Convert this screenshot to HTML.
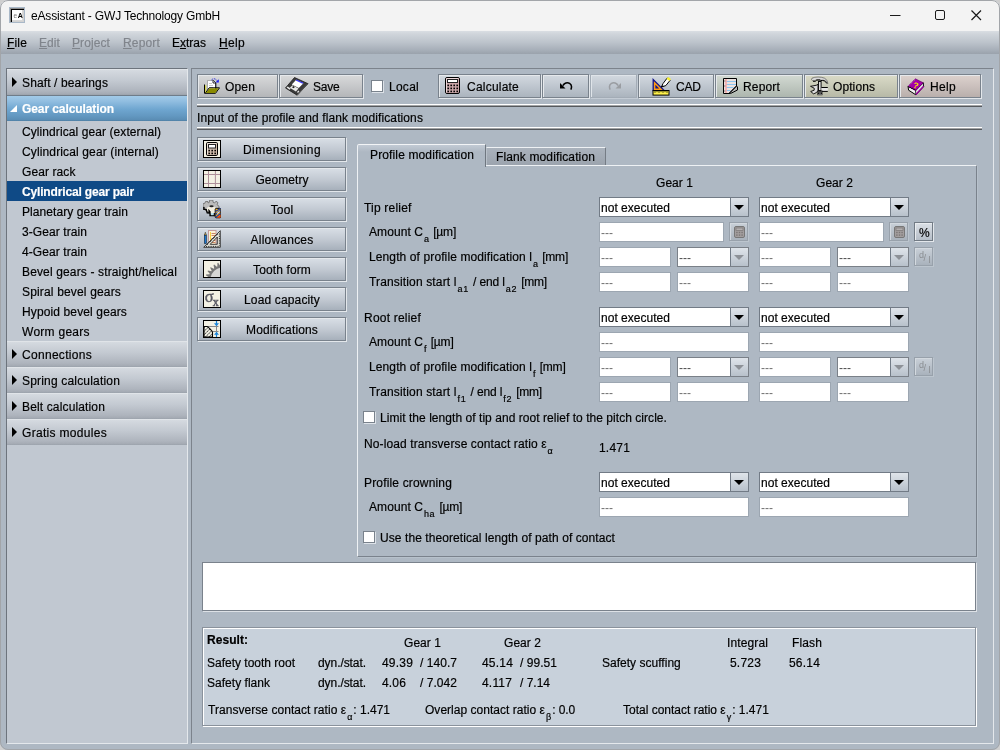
<!DOCTYPE html>
<html><head><meta charset="utf-8"><title>eAssistant - GWJ Technology GmbH</title>
<style>
*{box-sizing:border-box;margin:0;padding:0}
html,body{width:1000px;height:750px;overflow:hidden;background:#cfcfcf}
body{font-family:"Liberation Sans",Arial,sans-serif;font-size:12px;color:#000;position:relative}
.a{position:absolute;white-space:nowrap}
.t{position:absolute;white-space:nowrap;line-height:14px;height:14px;-webkit-text-stroke:.18px}
#win{will-change:transform;position:absolute;left:0;top:0;width:1000px;height:750px;background:#aeb8c3;border-radius:8px;overflow:hidden}
#frame{position:absolute;left:0;top:0;width:1000px;height:750px;border:1px solid #a2a5a9;border-radius:8px;z-index:50}
#title{position:absolute;left:0;top:0;width:1000px;height:31px;background:#f3f3f3}
#menu{position:absolute;left:0;top:31px;width:1000px;height:23px;background:linear-gradient(#dadee3 0,#d0d5db 12%,#bcc3cb 50%,#a5adb7 85%,#9aa2ac 100%)}

u{text-decoration:underline;text-underline-offset:1px}
#left{position:absolute;left:6px;top:68px;width:182px;height:676px;background:#c1c8d1;border-left:1px solid #6d747d;border-top:1px solid #6d747d;border-right:1px solid #e4e8ec;border-bottom:1px solid #e4e8ec}
.hd{position:absolute;left:7px;width:180px;height:26px;background:linear-gradient(#e6e9ed 0,#d4d9df 6%,#c3c9d1 45%,#aeb4bd 85%,#a4aab3 96%,#99a1ab 100%)}
.hd.sel{background:linear-gradient(#a6cdea 0,#90bde0 25%,#6fa6d0 55%,#6398c1 80%,#5a8db4 96%,#4c7da2 100%)}
.hd i{position:absolute;left:5px;top:8px;width:0;height:0;border-left:5.5px solid #000;border-top:5px solid transparent;border-bottom:5px solid transparent}
.hd.sel i{left:3px;top:10px;border-left:7px solid transparent;border-top:0;border-bottom:7px solid #fff}
.isel{position:absolute;left:7px;width:180px;height:20px;background:#0f4a86}
#main{position:absolute;left:191px;top:68px;width:803px;height:676px;border-left:1px solid #7c838c;border-top:1px solid #7c838c;border-right:1px solid #e4e8ec;border-bottom:1px solid #e4e8ec}
.tb{position:absolute;top:74px;height:24px;border:1px solid #79828c;background:linear-gradient(#d9dadb,#b4b6b9);box-shadow:1px 1px 0 #e3e7eb,inset 1px 1px 0 #e6e9ec}
.sep{position:absolute;left:197px;width:785px;height:3px;background:linear-gradient(#fff 0,#fff 33.3%,#a2a4a6 33.3%,#a2a4a6 66.6%,#55585c 66.6%)}
.sb{position:absolute;left:197px;width:149px;height:24px;border:1px solid #79828c;background:linear-gradient(#d9dfe6,#c3cad3 50%,#a7b0bb);box-shadow:1px 1px 0 #e3e7eb,inset 1px 1px 0 #e6e9ec}
.ic{position:absolute;width:18px;height:18px;background:#ece9d8;border:1px solid #444}
.f{position:absolute;height:20px;background:#fff;border:1px solid #9ca6b1;color:#707070;line-height:20px;padding-left:1px}
.c{position:absolute;height:20px;background:#fff;border:1px solid #727b86;line-height:20px;padding-left:1px;white-space:nowrap;-webkit-text-stroke:.18px}
.c:after{content:"";position:absolute;right:0;top:0;width:17px;height:18px;border-left:1px solid #727b86;background:linear-gradient(#dfe4ea,#b8c1cb)}
.c em{position:absolute;z-index:2;right:4px;top:7px;width:0;height:0;border-top:5.500px solid #000;border-left:5px solid transparent;border-right:5px solid transparent}
.c.d{color:#4a4a4a;border-color:#7a8088;-webkit-text-stroke:0}
.c.d em{border-top-color:#8d9197}
.cb{position:absolute;width:12px;height:12px;background:#fff;border:1px solid #79828c;box-shadow:1px 1px 0 #dde2e8}
sub{font-size:9px;vertical-align:baseline;position:relative;top:6px;margin-left:1px;margin-right:1px;line-height:0}
.pn{position:absolute}
</style></head><body>
<div id="win">
<div id="title"><div class="a" style="left:9px;top:7px;width:16px;height:16px;border:1px solid #a9b8c8;background:#fff;box-shadow:inset 1px 1px 0 #8c8c8c,inset 2px 2px 0 #000,inset -1px -1px 0 #d2d2d2,inset -2px -2px 0 #d8d8d8;font-size:7px;line-height:15px;padding-left:3.500px;overflow:hidden"><span style="color:#777;font-size:6.500px">e</span><b style="margin-left:.500px">A</b></div>
<div class="a" style="left:31px;top:8px;font-size:12px;line-height:16px;letter-spacing:-0.17px">eAssistant - GWJ Technology GmbH</div>
<svg class="a" style="left:880px;top:0" width="120" height="31" viewBox="0 0 120 31" fill="none" stroke="#1a1a1a" stroke-width="1"><path d="M10 15.500h10.500"/><rect x="55.5" y="10.5" width="9" height="9" rx="1.5"/><path d="M91.500 10.500l9.500 9.500M101 10.500l-9.500 9.500" stroke-width="1.200"/></svg></div>
<div id="menu"></div>
<div class="t" style="left:7px;top:36px;letter-spacing:0.166px;"><u>F</u>ile</div>
<div class="t" style="left:39px;top:36px;color:#80858c;letter-spacing:0.081px;"><u>E</u>dit</div>
<div class="t" style="left:72px;top:36px;color:#80858c;letter-spacing:0.093px;"><u>P</u>roject</div>
<div class="t" style="left:123px;top:36px;color:#80858c;letter-spacing:0.164px;"><u>R</u>eport</div>
<div class="t" style="left:172px;top:36px;letter-spacing:-0.001px;">E<u>x</u>tras</div>
<div class="t" style="left:219px;top:36px;letter-spacing:0.33px;"><u>H</u>elp</div>
<div id="left"></div>
<div class="hd" style="top:69px"><i></i></div>
<div class="t" style="left:22px;top:76px;letter-spacing:0.122px;">Shaft / bearings</div>
<div class="hd sel" style="top:95px"><i></i></div>
<div class="t" style="left:22px;top:102px;font-weight:bold;color:#fff;letter-spacing:-0.086px;">Gear calculation</div>
<div class="pn" style="left:7px;top:95px;width:180px;height:1px;background:#6f7c89"></div>
<div class="t" style="left:22px;top:125px;letter-spacing:0.085px;">Cylindrical gear (external)</div>
<div class="t" style="left:22px;top:145px;letter-spacing:0.134px;">Cylindrical gear (internal)</div>
<div class="t" style="left:22px;top:165px;letter-spacing:0.091px;">Gear rack</div>
<div class="isel" style="top:181px"></div>
<div class="t" style="left:22px;top:185px;font-weight:bold;color:#fff;letter-spacing:-0.161px;">Cylindrical gear pair</div>
<div class="t" style="left:22px;top:205px;letter-spacing:0.064px;">Planetary gear train</div>
<div class="t" style="left:22px;top:225px;letter-spacing:0.081px;">3-Gear train</div>
<div class="t" style="left:22px;top:245px;letter-spacing:0.081px;">4-Gear train</div>
<div class="t" style="left:22px;top:265px;letter-spacing:0.142px;">Bevel gears - straight/helical</div>
<div class="t" style="left:22px;top:285px;letter-spacing:0.164px;">Spiral bevel gears</div>
<div class="t" style="left:22px;top:305px;letter-spacing:0.126px;">Hypoid bevel gears</div>
<div class="t" style="left:22px;top:325px;letter-spacing:0.266px;">Worm gears</div>
<div class="hd" style="top:341px"><i></i></div>
<div class="t" style="left:22px;top:348px;letter-spacing:0.299px;">Connections</div>
<div class="hd" style="top:367px"><i></i></div>
<div class="t" style="left:22px;top:374px;letter-spacing:0.182px;">Spring calculation</div>
<div class="hd" style="top:393px"><i></i></div>
<div class="t" style="left:22px;top:400px;letter-spacing:0.143px;">Belt calculation</div>
<div class="hd" style="top:419px"><i></i></div>
<div class="t" style="left:22px;top:426px;letter-spacing:0.307px;">Gratis modules</div>
<div id="main"></div>
<div class="tb" style="left:197px;width:81px;"></div>
<div class="t" style="left:225px;top:80px;letter-spacing:0.161px;">Open</div>
<div class="tb" style="left:279px;width:84px;"></div>
<div class="t" style="left:313px;top:80px;letter-spacing:-0.213px;">Save</div>
<div class="cb" style="left:371px;top:80px"></div>
<div class="t" style="left:389px;top:80px;letter-spacing:0.263px;">Local</div>
<div class="tb" style="left:438px;width:103px;background:linear-gradient(#d3d9e0,#abb4be);"></div>
<div class="t" style="left:467px;top:80px;letter-spacing:0.219px;">Calculate</div>
<div class="tb" style="left:542px;width:47px;background:linear-gradient(#d3d9e0,#abb4be);"></div>
<div class="tb" style="left:590px;width:47px;background:linear-gradient(#d3d9e0,#abb4be);border-color:#a3acb6;box-shadow:1px 1px 0 #c3cbd4,inset 1px 1px 0 #dfe4e9;"></div>
<div class="tb" style="left:638px;width:76px;background:linear-gradient(#d3d9e0,#abb4be);"></div>
<div class="t" style="left:676px;top:80px;letter-spacing:-0.179px;">CAD</div>
<div class="tb" style="left:715px;width:88px;background:linear-gradient(#d3dad3,#adb6ae);"></div>
<div class="t" style="left:743px;top:80px;letter-spacing:0.164px;">Report</div>
<div class="tb" style="left:804px;width:94px;background:linear-gradient(#dadbc8,#b7b9a7);"></div>
<div class="t" style="left:833px;top:80px;letter-spacing:0.092px;">Options</div>
<div class="tb" style="left:899px;width:82px;background:linear-gradient(#ddd2ce,#b9afac);"></div>
<div class="t" style="left:930px;top:80px;letter-spacing:0.33px;">Help</div>
<svg class="a" style="left:204px;top:78px" width="16" height="17" viewBox="0 0 16 17" ><path d="M3.5 2.5h5.5l2.5 2.5v6.5h-8z" fill="#fff" stroke="#888" stroke-width=".6"/>
<path d="M9 2.2l2.8 2.8v6" fill="none" stroke="#000" stroke-width="1"/><path d="M9 2.5v2.5h2.5" fill="#fff" stroke="#000" stroke-width=".8"/>
<path d="M5 5.5h3M5 7.5h4M5 9.5h4" stroke="#bbb" stroke-width=".8"/>
<path d="M.6 7.2h1.6v7.6h-1.6z" fill="#d6d64a"/>
<path d="M.5 6.5v8.8h11l4-5.5h-10.3l-3.6 5" fill="none" stroke="#000" stroke-width="1"/>
<path d="M1.8 15l3.7-4.8h9.3l-3.6 4.8z" fill="#8a8a00"/>
<path d="M7.5 2c1.5-1.8 4-1.6 5.6.6" fill="none" stroke="#2a2ad8" stroke-width="1" stroke-dasharray="1.6 1"/>
<path d="M14.8 1.2v3.4h-3.4z" fill="#1c1cf0"/></svg>
<svg class="a" style="left:285px;top:77px" width="24" height="19" viewBox="0 0 24 19" ><path d="M9.5.5l13.5 6.2-10.8 11.5-11.7-7.2z" fill="#3a3a3a" stroke="#1a1a1a" stroke-width=".8"/>
<path d="M11.2 2.8l7.2 3.4-4.6 4.8-7-3.6z" fill="#fff"/>
<path d="M11.6 2.4l7 3.3-.9 1-7-3.3z" fill="#3a3af0"/>
<path d="M1.5 10.6l1.2-1 3 1.9-1.2 1.2zM4.8 10.8l2.7-2.6 6 3.3-2.6 2.9zM12 15l1.4-1.5 1 .8-1.4 1.6z" fill="#e8e8e8"/>
<path d="M7 10.2l1.3-1.2 1.6.9-1.3 1.3z" fill="#222"/>
<path d="M12.2 18l10.6-11.3" stroke="#666" stroke-width=".8"/></svg>
<svg class="a" style="left:445px;top:77px" width="15" height="17" viewBox="0 0 15 17" ><rect x=".5" y=".5" width="14" height="16" rx="1.5" fill="#c9a5a8" stroke="#000"/>
<path d="M1.5 15.5v-14h12" fill="none" stroke="#ecd6d8" stroke-width="1"/>
<rect x="2.5" y="2.5" width="10" height="3" fill="#fff" stroke="#222" stroke-width="1"/>
<g fill="#000"><rect x="2.4" y="7.6" width="1.6" height="1.6"/><rect x="5.4" y="7.6" width="1.6" height="1.6"/><rect x="8.4" y="7.6" width="1.6" height="1.6"/><rect x="11.4" y="7.6" width="1.6" height="1.6"/><rect x="2.4" y="10.6" width="1.6" height="1.6"/><rect x="5.4" y="10.6" width="1.6" height="1.6"/><rect x="8.4" y="10.6" width="1.6" height="1.6"/><rect x="11.4" y="10.6" width="1.6" height="1.6"/><rect x="2.4" y="13.6" width="1.6" height="1.6"/><rect x="5.4" y="13.6" width="1.6" height="1.6"/><rect x="8.4" y="13.6" width="1.6" height="1.6"/><rect x="11.4" y="13.6" width="1.6" height="1.6"/></g></svg>
<svg class="a" style="left:559px;top:81px" width="14" height="10" viewBox="0 0 14 10" ><path d="M1 2v5.5h5.5z" fill="#000"/><path d="M3.8 4.6c1.6-2.6 4.4-3.6 6.8-2.2 2.2 1.4 2.4 3.6 1.2 6.2" fill="none" stroke="#000" stroke-width="1.5"/></svg>
<svg class="a" style="left:608px;top:81px" width="14" height="10" viewBox="0 0 14 10" ><g transform="translate(14,0) scale(-1,1)"><path d="M1 2v5.5h5.5z" fill="#9a9da2"/><path d="M3.8 4.6c1.6-2.6 4.4-3.6 6.8-2.2 2.2 1.4 2.4 3.6 1.2 6.2" fill="none" stroke="#9a9da2" stroke-width="1.5"/></g></svg>
<svg class="a" style="left:652px;top:76px" width="20" height="20" viewBox="0 0 20 20" ><path d="M1.2 3.6v11h11z" fill="#ff9a10" stroke="#14148c" stroke-width="1.3" stroke-linejoin="miter"/>
<path d="M3.4 8.8v3.8h3.8z" fill="#14148c"/>
<rect x="1" y="14.5" width="16" height="4.6" fill="#fff24a" stroke="#000" stroke-width="1"/>
<path d="M3 14.8v2M5 14.8v1.4M7 14.8v2M9 14.8v1.4M11 14.8v2M13 14.8v1.4M15 14.8v2" stroke="#000" stroke-width=".8"/>
<path d="M9.4 11l1.6-3.4 4.2-5.6 3 2.2-4.400 5.400z" fill="#fff" stroke="#000" stroke-width="1"/>
<path d="M14.400 2.800l1.800-1.900 2.800 2-1.500 2.200z" fill="#f4ee30"/>
<path d="M9 11.600l1.500-2.400 1.300 1z" fill="#000"/></svg>
<svg class="a" style="left:723px;top:78px" width="16" height="17" viewBox="0 0 16 17" ><path d="M.5.5h13v7.500l-7.500 7.500h-5.500z" fill="#ebe2e0" stroke="none"/>
<path d="M3.500 3.500h9.500M3.500 6.500h9.500M3.500 9.500h7M3.500 12.500h4" stroke="#8cc4ee" stroke-width="1"/>
<path d="M3 1v14" stroke="#ff8a8a" stroke-width="1"/>
<path d="M1.800 2.500v1M1.800 7.500v1M1.800 12.500v1" stroke="#333" stroke-width=".8"/>
<path d="M13.500 8l1 .8v3.200l-7 3.500h-1.500z" fill="#b8b8b8" stroke="#000" stroke-width="1"/>
<path d="M.5.500h13v7.500l-7.500 7.500h-5.500z" fill="none" stroke="#000" stroke-width="1"/></svg>
<svg class="a" style="left:810px;top:76px" width="19" height="20" viewBox="0 0 19 20" ><path d="M2 2.200c3-1.600 9-1.600 12.500 0 2 1 3 3 3.300 5.500l-1.300-1.800c-1-1.400-2.400-1.600-4-1.600h-2.500v-.8h-3.500l-1.500 1.200h-2.500l-1-1.200z" fill="#d8d8d8" stroke="#444" stroke-width=".6"/>
<path d="M3 5.300h2.300l1.500-1.200h3.400" fill="none" stroke="#000" stroke-width="1"/>
<path d="M10.500 4.500c3-.3 5 .3 6.300 3" fill="none" stroke="#000" stroke-width="1"/>
<rect x="8.500" y="5.500" width="2.600" height="9" fill="#e0e0e0" stroke="#000" stroke-width=".9"/>
<path d="M0.500 10.300l4.500-.8c1.500-.2 2.500-.6 3-1.200v6.500c-1 1.400-2.500 2.500-4.500 3l-2.800-2.300 3.500-1.300v-2z" fill="#dcdcdc" stroke="#000" stroke-width=".9"/>
<rect x="11.400" y="11.700" width="6.400" height="3.400" fill="#e6e6e6" stroke="none"/><path d="M11.400 11.500h6.400M11.400 15.400h6.400" stroke="#000" stroke-width="1"/>
<rect x="7.400" y="14.500" width="5" height="4.700" fill="#111"/>
<path d="M8.500 15.600h1v1h-1zM10.500 15.600h1v1h-1zM9.500 16.800h1v1h-1zM8.500 17.900h1v1h-1zM10.500 17.900h1v1h-1z" fill="#ccc"/></svg>
<svg class="a" style="left:907px;top:78px" width="18" height="18" viewBox="0 0 18 18" ><path d="M1 8.200l.6 4 7.200 4.600 7.800-8.300-.4-3.600z" fill="#f2f2f2" stroke="#000" stroke-width="1"/>
<path d="M8.500 12.500l.4 4.200 7.700-8.200-.4-3.600z" fill="#e4ece4" stroke="#000" stroke-width=".8"/>
<path d="M8.800 16.500l7.700-8.200" stroke="#9a009e" stroke-width="1.400"/>
<path d="M8.300.8l8 4-7.600 8-7.800-4.600z" fill="#a400a8" stroke="#5a005e" stroke-width=".6"/>
<path d="M1.200 8l7.300-7" stroke="#d9a6dc" stroke-width="1" stroke-dasharray="1 1"/>
<path d="M1 8.500l1.300 1 1-.4 1.200 1.400 1-.4 1.200 1.400 1-.3 1 1.200" fill="none" stroke="#000" stroke-width=".9"/><text x="6.200" y="10.300" font-family="Liberation Sans,sans-serif" font-weight="bold" font-size="8.500" fill="#f4f000" transform="rotate(18 8 8)">?</text></svg>
<div class="sep" style="top:104px"></div>
<div class="t" style="left:197px;top:111px;letter-spacing:0.103px;">Input of the profile and flank modifications</div>
<div class="sep" style="top:127px"></div>
<div class="sb" style="top:137px"></div>
<svg class="a" style="left:203px;top:140px" width="18" height="18" viewBox="0 0 18 18" ><rect x=".5" y=".5" width="17" height="17" fill="#f3f1e4" stroke="#000" stroke-width="1"/><rect x="3.500" y="2.500" width="11" height="13" rx="1.300" fill="#cdb9aa" stroke="#000" stroke-width="1"/>
<path d="M4.500 14.500v-11h9" fill="none" stroke="#eadfd6" stroke-width="1"/>
<rect x="5.500" y="4.500" width="7" height="3.500" fill="#fff" stroke="#222" stroke-width="1"/>
<g fill="#000"><rect x="5.400" y="9.800" width="1.600" height="1.600"/><rect x="8.400" y="9.800" width="1.600" height="1.600"/><rect x="11.400" y="9.800" width="1.600" height="1.600"/><rect x="5.400" y="12.600" width="1.600" height="1.600"/><rect x="8.400" y="12.600" width="1.600" height="1.600"/><rect x="11.400" y="12.600" width="1.600" height="1.600"/></g></svg>
<div class="t" style="left:217px;top:143px;width:130px;text-align:center;letter-spacing:0.441px;">Dimensioning</div>
<div class="sb" style="top:167px"></div>
<svg class="a" style="left:203px;top:170px" width="18" height="18" viewBox="0 0 18 18" ><rect x=".5" y=".5" width="17" height="17" fill="#f3f1e4" stroke="#000" stroke-width="1"/><path d="M5.500 1v16M12.400 1v16M1 4.500h16M1 13.500h16" stroke="#ad8f99" stroke-width="1"/></svg>
<div class="t" style="left:217px;top:173px;width:130px;text-align:center;letter-spacing:0.04px;">Geometry</div>
<div class="sb" style="top:197px"></div>
<svg class="a" style="left:203px;top:200px" width="18" height="19" viewBox="0 0 18 19" ><path d="M2.500 1.500h2.500v1.500l1.500-.8v-2h3.500v2l1.500.800 1.500-1.800 2 1.500-1 2 2 1.500v3h-4l-2 2.500h-6l-2.500-2v-2.500h-1.500v-3.500l2-.5z" fill="#bcbcbc" stroke="#6a6a6a" stroke-width=".8"/>
<path d="M3 8.500l3-2h5l2.500 2v3l-2 1.500h-6z" fill="#f2eee2"/>
<ellipse cx="8.500" cy="6.200" rx="2.200" ry="1" fill="#222"/>
<path d="M.8 7v2.300h2.400l1 3.500 1.800.2v-2.500l1 1.200v3.800h4.200v-2.500" fill="none" stroke="#000" stroke-width="1.300"/>
<rect x="8" y="13" width="2.600" height="2.200" fill="#b8e2ee"/>
<rect x="12.200" y="8.400" width="5.600" height="9.400" rx="1" fill="#f0b020" stroke="#000" stroke-width=".9"/>
<path d="M12.500 11.500l5-3M12.500 14.500l5-4M12.500 17.500l5-4" stroke="#1c3ea8" stroke-width="1.300"/>
<path d="M13.500 17.800l4-3.300v3.300z" fill="#f04010"/>
<path d="M14 13.500l2.500-2" stroke="#fff" stroke-width="1"/></svg>
<div class="t" style="left:217px;top:203px;width:130px;text-align:center;letter-spacing:0.164px;">Tool</div>
<div class="sb" style="top:227px"></div>
<svg class="a" style="left:203px;top:230px" width="18" height="18" viewBox="0 0 18 18" ><rect x="5.500" y=".500" width="7.500" height="14" fill="#fbf3d6" stroke="#c49a9a" stroke-width="1"/>
<path d="M7.500 2v12" stroke="#f8d040" stroke-width="1"/>
<path d="M8.500 3.500h4M8.500 5.500h4M8.500 10.500h4M8.500 12.500h4M8.500 8.500h3" stroke="#c87858" stroke-width=".9"/>
<path d="M.7 17.300h16.600v-16.600zM7.200 14.300l7.100-7.300v7.300z" fill="#deded6" fill-rule="evenodd" stroke="#1a1a1a" stroke-width=".8"/>
<path d="M4.200 14.800l10.800-11" stroke="#000" stroke-width="1" stroke-dasharray="1 1"/>
<path d="M3 16.400h13M16.400 3.500v12" stroke="#111" stroke-width=".9" stroke-dasharray="1 1.300"/>
<rect x="1.400" y="5" width="1.900" height="8.500" fill="#1c78d0" stroke="#123" stroke-width=".6"/>
<path d="M1.400 5l.95-2.800.95 2.800z" fill="#f0c050" stroke="#222" stroke-width=".5"/></svg>
<div class="t" style="left:217px;top:233px;width:130px;text-align:center;letter-spacing:0.23px;">Allowances</div>
<div class="sb" style="top:257px"></div>
<svg class="a" style="left:203px;top:260px" width="18" height="18" viewBox="0 0 18 18" ><rect x=".5" y=".5" width="17" height="17" fill="#f3f1e4"/><clipPath id="tc"><rect x="1" y="1" width="16" height="16"/></clipPath><g clip-path="url(#tc)"><path d="M20.00 20.00L7.62 27.74L7.49 27.52L4.03 27.86L3.71 27.18L6.20 24.75L6.11 24.51L6.11 24.51L6.04 24.27L2.60 23.76L2.46 23.03L5.46 21.27L5.44 21.02L5.44 21.02L5.42 20.76L2.21 19.44L2.25 18.70L5.58 17.72L5.62 17.46L5.62 17.46L5.67 17.21L2.87 15.15L3.09 14.44L6.56 14.30L6.66 14.06L6.66 14.06L6.77 13.83L4.55 11.15L4.94 10.51L8.34 11.21L8.50 11.01L8.50 11.01L8.65 10.81L7.15 7.68L7.68 7.15L10.81 8.65L11.01 8.50L11.01 8.50L11.21 8.34L10.51 4.94L11.15 4.55L13.83 6.77L14.06 6.66L14.06 6.66L14.30 6.56L14.44 3.09L15.15 2.87L17.21 5.67L17.46 5.62L17.46 5.62L17.72 5.58L18.70 2.25L19.44 2.21L20.76 5.42L21.02 5.44L21.02 5.44L21.27 5.46L23.03 2.46L23.76 2.60L24.27 6.04L24.51 6.11Z" fill="#777"/><circle cx="20" cy="20" r="12.600" fill="#d6d6d4"/></g><rect x=".5" y=".5" width="17" height="17" fill="none" stroke="#000" stroke-width="1"/></svg>
<div class="t" style="left:217px;top:263px;width:130px;text-align:center;letter-spacing:0.128px;">Tooth form</div>
<div class="sb" style="top:287px"></div>
<svg class="a" style="left:203px;top:290px" width="18" height="18" viewBox="0 0 18 18" ><rect x=".5" y=".5" width="17" height="17" fill="#f3f1e4" stroke="#000" stroke-width="1"/><text x="1.800" y="11.800" font-family="Liberation Serif,serif" font-size="16.500" fill="#5a5a64" stroke="#5a5a64" stroke-width=".4">σ</text><text x="9.800" y="15.600" font-family="Liberation Serif,serif" font-size="12" fill="#5a5a64" stroke="#5a5a64" stroke-width=".5">x</text></svg>
<div class="t" style="left:217px;top:293px;width:130px;text-align:center;letter-spacing:0.15px;">Load capacity</div>
<div class="sb" style="top:317px"></div>
<svg class="a" style="left:203px;top:320px" width="18" height="18" viewBox="0 0 18 18" ><rect x=".5" y=".5" width="17" height="17" fill="#f3f1e4" stroke="#000" stroke-width="1"/><defs><pattern id="hp" width="2.500" height="2.500" patternUnits="userSpaceOnUse" patternTransform="rotate(-45)"><rect width="2.500" height="2.500" fill="#f3f1e4"/><path d="M0 1.250h2.500" stroke="#444" stroke-width=".8" stroke-dasharray="1.200 .500"/></pattern></defs>
<path d="M4 6.500h11.500M10 11.500h5.500" stroke="#888" stroke-width="1"/><path d="M13.500 6.500v5" stroke="#888" stroke-width="1"/>
<path d="M1 6.500h2.800c1 0 1.500.5 2.200 1.300l2.600 2.800c.6.600.9 1 .9 1.800v4.600h-8.500z" fill="url(#hp)" stroke="#000" stroke-width="1.100"/>
<path d="M13.500 1v4.500M13.500 17v-4.500" stroke="#1a84d8" stroke-width="1.200"/>
<path d="M11 3.200h5l-2.500 3zM11 14.800h5l-2.500-3z" fill="#1a84d8"/></svg>
<div class="t" style="left:217px;top:323px;width:130px;text-align:center;letter-spacing:0.151px;">Modifications</div>
<div class="pn" style="left:357px;top:165px;width:620px;height:392px;border:1px solid #7a828c;border-top-color:#eef1f4;border-left-color:#eef1f4;box-shadow:1px 1px 0 #b7c1cb"></div>
<div class="pn" style="left:486px;top:147px;width:120px;height:18px;border:1px solid #757c85;border-bottom:0;border-top-color:#eef1f4;border-left-color:#b9c1ca;background:linear-gradient(#aab2bc,#9ca4ae)"></div>
<div class="pn" style="left:357px;top:144px;width:129px;height:23px;border:1px solid #6f7780;border-bottom:0;border-top-color:#f2f4f6;border-left-color:#eef1f4;background:linear-gradient(#c2cad4,#aeb8c3 7px,#aeb8c3);border-radius:2px 0 0 0"></div>
<div class="pn" style="left:358px;top:165px;width:127px;height:2px;background:#aeb8c3"></div>
<div class="t" style="left:370px;top:148px;letter-spacing:0.131px;">Profile modification</div>
<div class="t" style="left:496px;top:150px;letter-spacing:0.127px;">Flank modification</div>
<div class="t" style="left:656px;top:176px;letter-spacing:0.052px;">Gear 1</div>
<div class="t" style="left:816px;top:176px;letter-spacing:0.052px;">Gear 2</div>
<div class="c" style="left:599px;top:197px;width:150px;letter-spacing:0.023px">not executed<em></em></div>
<div class="f" style="left:599px;top:247px;width:72px">---</div>
<div class="c d" style="left:677px;top:247px;width:72px;letter-spacing:0px">---<em></em></div>
<div class="f" style="left:599px;top:272px;width:72px">---</div>
<div class="f" style="left:677px;top:272px;width:72px">---</div>
<div class="c" style="left:759px;top:197px;width:150px;letter-spacing:0.023px">not executed<em></em></div>
<div class="f" style="left:759px;top:247px;width:72px">---</div>
<div class="c d" style="left:837px;top:247px;width:72px;letter-spacing:0px">---<em></em></div>
<div class="f" style="left:759px;top:272px;width:72px">---</div>
<div class="f" style="left:837px;top:272px;width:72px">---</div>
<div class="c" style="left:599px;top:307px;width:150px;letter-spacing:0.023px">not executed<em></em></div>
<div class="f" style="left:599px;top:357px;width:72px">---</div>
<div class="c d" style="left:677px;top:357px;width:72px;letter-spacing:0px">---<em></em></div>
<div class="f" style="left:599px;top:382px;width:72px">---</div>
<div class="f" style="left:677px;top:382px;width:72px">---</div>
<div class="c" style="left:759px;top:307px;width:150px;letter-spacing:0.023px">not executed<em></em></div>
<div class="f" style="left:759px;top:357px;width:72px">---</div>
<div class="c d" style="left:837px;top:357px;width:72px;letter-spacing:0px">---<em></em></div>
<div class="f" style="left:759px;top:382px;width:72px">---</div>
<div class="f" style="left:837px;top:382px;width:72px">---</div>
<div class="f" style="left:599px;top:222px;width:125px">---</div>
<div class="pn" style="left:729px;top:222px;width:19px;height:19px;border:1px solid #98a1ab;background:linear-gradient(#c9d0d8,#a9b2bc);box-shadow:1px 1px 0 #bcc5ce,inset 1px 1px 0 #d3d9df"></div>
<svg class="a" style="left:734px;top:226px" width="11" height="12" viewBox="0 0 11 12" ><rect x=".5" y=".5" width="10" height="11" rx="1.500" fill="#a39e9e" stroke="#777" stroke-width="1"/>
<rect x="2" y="2" width="7" height="2.500" fill="#b4b0b0" stroke="#7a7676" stroke-width=".7"/>
<g fill="#7a7575"><rect x="2.200" y="5.800" width="1.400" height="1.400"/><rect x="4.800" y="5.800" width="1.400" height="1.400"/><rect x="7.400" y="5.800" width="1.400" height="1.400"/><rect x="2.200" y="8.400" width="1.400" height="1.400"/><rect x="4.800" y="8.400" width="1.400" height="1.400"/><rect x="7.400" y="8.400" width="1.400" height="1.400"/></g></svg>
<div class="f" style="left:599px;top:332px;width:150px">---</div>
<div class="f" style="left:759px;top:222px;width:125px">---</div>
<div class="pn" style="left:889px;top:222px;width:19px;height:19px;border:1px solid #98a1ab;background:linear-gradient(#c9d0d8,#a9b2bc);box-shadow:1px 1px 0 #bcc5ce,inset 1px 1px 0 #d3d9df"></div>
<svg class="a" style="left:894px;top:226px" width="11" height="12" viewBox="0 0 11 12" ><rect x=".5" y=".5" width="10" height="11" rx="1.500" fill="#a39e9e" stroke="#777" stroke-width="1"/>
<rect x="2" y="2" width="7" height="2.500" fill="#b4b0b0" stroke="#7a7676" stroke-width=".7"/>
<g fill="#7a7575"><rect x="2.200" y="5.800" width="1.400" height="1.400"/><rect x="4.800" y="5.800" width="1.400" height="1.400"/><rect x="7.400" y="5.800" width="1.400" height="1.400"/><rect x="2.200" y="8.400" width="1.400" height="1.400"/><rect x="4.800" y="8.400" width="1.400" height="1.400"/><rect x="7.400" y="8.400" width="1.400" height="1.400"/></g></svg>
<div class="f" style="left:759px;top:332px;width:150px">---</div>
<div class="pn" style="left:914px;top:222px;width:19px;height:19px;border:1px solid #727b85;background:linear-gradient(#dbe0e6,#b6bec8);box-shadow:1px 1px 0 #e3e7eb,inset 1px 1px 0 #e9ecef"></div>
<div class="t" style="left:919px;top:226px;letter-spacing:0.33px;">%</div>
<div class="pn" style="left:914px;top:247px;width:19px;height:19px;border:1px solid #98a1ab;background:linear-gradient(#c9d0d8,#a9b2bc);box-shadow:1px 1px 0 #bcc5ce,inset 1px 1px 0 #d3d9df"></div>
<div class="a" style="left:919px;top:250px;font-size:9px;line-height:10px;color:#8a8d91">d</div><div class="a" style="left:923.500px;top:253px;font-size:9px;line-height:10px;color:#8a8d91">/</div><div class="a" style="left:928.500px;top:255px;font-size:9px;line-height:10px;color:#8a8d91">l</div>
<div class="pn" style="left:914px;top:357px;width:19px;height:19px;border:1px solid #98a1ab;background:linear-gradient(#c9d0d8,#a9b2bc);box-shadow:1px 1px 0 #bcc5ce,inset 1px 1px 0 #d3d9df"></div>
<div class="a" style="left:919px;top:360px;font-size:9px;line-height:10px;color:#8a8d91">d</div><div class="a" style="left:923.500px;top:363px;font-size:9px;line-height:10px;color:#8a8d91">/</div><div class="a" style="left:928.500px;top:365px;font-size:9px;line-height:10px;color:#8a8d91">l</div>
<div class="t" style="left:364px;top:201px;letter-spacing:0.199px;">Tip relief</div>
<div class="t" style="left:369px;top:225px"><span style="letter-spacing:0.081px">Amount C</span><sub style="letter-spacing:0px">a</sub><span style="letter-spacing:-0.182px"> [µm]</span></div>
<div class="t" style="left:369px;top:250px"><span style="letter-spacing:0.112px">Length of profile modification l</span><sub style="letter-spacing:0px">a</sub><span style="letter-spacing:-0.199px"> [mm]</span></div>
<div class="t" style="left:369px;top:275px"><span style="letter-spacing:0.147px">Transition start l</span><sub style="letter-spacing:0.6px">a1</sub><span style="letter-spacing:-0.128px"> / end l</span><sub style="letter-spacing:0.6px">a2</sub><span style="letter-spacing:-0.199px"> [mm]</span></div>
<div class="t" style="left:364px;top:311px;letter-spacing:0.21px;">Root relief</div>
<div class="t" style="left:369px;top:335px"><span style="letter-spacing:0.081px">Amount C</span><sub style="letter-spacing:0px">f</sub><span style="letter-spacing:-0.182px"> [µm]</span></div>
<div class="t" style="left:369px;top:360px"><span style="letter-spacing:0.112px">Length of profile modification l</span><sub style="letter-spacing:0px">f</sub><span style="letter-spacing:-0.199px"> [mm]</span></div>
<div class="t" style="left:369px;top:385px"><span style="letter-spacing:0.147px">Transition start l</span><sub style="letter-spacing:0.6px">f1</sub><span style="letter-spacing:-0.128px"> / end l</span><sub style="letter-spacing:0.6px">f2</sub><span style="letter-spacing:-0.199px"> [mm]</span></div>
<div class="cb" style="left:363px;top:411px"></div>
<div class="t" style="left:380px;top:411px;letter-spacing:0.047px;">Limit the length of tip and root relief to the pitch circle.</div>
<div class="t" style="left:364px;top:437px"><span style="letter-spacing:0.113px">No-load transverse contact ratio ε</span><sub style="letter-spacing:0px">α</sub></div>
<div class="t" style="left:599px;top:441px;letter-spacing:0.194px;">1.471</div>
<div class="t" style="left:364px;top:476px;letter-spacing:0.164px;">Profile crowning</div>
<div class="c" style="left:599px;top:472px;width:150px;letter-spacing:0.023px">not executed<em></em></div>
<div class="f" style="left:599px;top:497px;width:150px">---</div>
<div class="c" style="left:759px;top:472px;width:150px;letter-spacing:0.023px">not executed<em></em></div>
<div class="f" style="left:759px;top:497px;width:150px">---</div>
<div class="t" style="left:369px;top:500px"><span style="letter-spacing:0.081px">Amount C</span><sub style="letter-spacing:0.6px">ha</sub><span style="letter-spacing:-0.182px"> [µm]</span></div>
<div class="cb" style="left:363px;top:531px"></div>
<div class="t" style="left:380px;top:531px;letter-spacing:0.078px;">Use the theoretical length of path of contact</div>
<div class="pn" style="left:202px;top:562px;width:774px;height:49px;background:#fff;border:1px solid #7a828c;box-shadow:1px 1px 0 #dde1e6"></div>
<div class="pn" style="left:202px;top:627px;width:774px;height:99px;background:#c8d1db;border:1px solid #8a929c;box-shadow:1px 1px 0 #fff,inset 1px 1px 0 #fff"></div>
<div class="t" style="left:207px;top:633px;font-weight:bold;letter-spacing:0.047px;">Result:</div>
<div class="t" style="left:404px;top:636px;letter-spacing:0.052px;">Gear 1</div>
<div class="t" style="left:504px;top:636px;letter-spacing:0.052px;">Gear 2</div>
<div class="t" style="left:727px;top:636px;letter-spacing:0.122px;">Integral</div>
<div class="t" style="left:792px;top:636px;letter-spacing:0.131px;">Flash</div>
<div class="t" style="left:207px;top:656px;letter-spacing:-0.003px;">Safety tooth root</div>
<div class="t" style="left:318px;top:656px;letter-spacing:-0.069px;">dyn./stat.</div>
<div class="t" style="left:382px;top:656px;letter-spacing:0.194px;">49.39</div>
<div class="t" style="left:420px;top:656px;letter-spacing:0.043px;">/ 140.7</div>
<div class="t" style="left:482px;top:656px;letter-spacing:0.194px;">45.14</div>
<div class="t" style="left:520px;top:656px;letter-spacing:0.043px;">/ 99.51</div>
<div class="t" style="left:602px;top:656px;letter-spacing:0.019px;">Safety scuffing</div>
<div class="t" style="left:730px;top:656px;letter-spacing:0.194px;">5.723</div>
<div class="t" style="left:789px;top:656px;letter-spacing:0.194px;">56.14</div>
<div class="t" style="left:207px;top:676px;letter-spacing:0.025px;">Safety flank</div>
<div class="t" style="left:318px;top:676px;letter-spacing:-0.069px;">dyn./stat.</div>
<div class="t" style="left:382px;top:676px;letter-spacing:0.161px;">4.06</div>
<div class="t" style="left:420px;top:676px;letter-spacing:0.043px;">/ 7.042</div>
<div class="t" style="left:482px;top:676px;letter-spacing:0.194px;">4.117</div>
<div class="t" style="left:520px;top:676px;letter-spacing:-0.004px;">/ 7.14</div>
<div class="t" style="left:208px;top:703px"><span style="letter-spacing:0.046px">Transverse contact ratio ε</span><sub style="letter-spacing:0px">α</sub><span style="letter-spacing:-0.004px">:  1.471</span></div>
<div class="t" style="left:425px;top:703px"><span style="letter-spacing:0.026px">Overlap contact ratio ε</span><sub style="letter-spacing:0px">β</sub><span style="letter-spacing:-0.114px">:  0.0</span></div>
<div class="t" style="left:623px;top:703px"><span style="letter-spacing:-0.003px">Total contact ratio ε</span><sub style="letter-spacing:0px">γ</sub><span style="letter-spacing:-0.004px">:  1.471</span></div>
</div>
<div id="frame"></div>
</body></html>
